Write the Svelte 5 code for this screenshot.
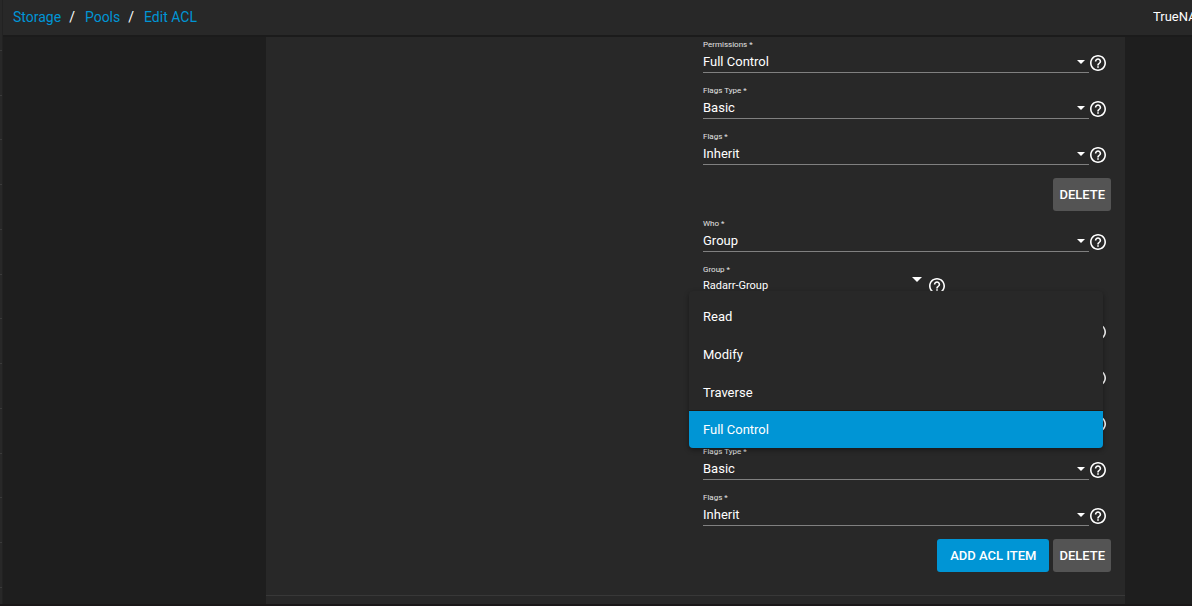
<script lang="ts">
    type Field = {
        id: string;
        label: string;
        value: string;
        options: string[];
    };

    const permissions: string[] = ["Read", "Modify", "Traverse", "Full Control"];
    const whoOptions: string[] = ["User", "Group", "owner@", "group@", "everyone@"];

    let firstItem: Field[] = [
        { id: "perms-0", label: "Permissions *", value: "Full Control", options: permissions },
        { id: "flags-type-0", label: "Flags Type *", value: "Basic", options: ["Basic", "Advanced"] },
        { id: "flags-0", label: "Flags *", value: "Inherit", options: ["Inherit", "No Inherit"] },
    ];

    let who: Field[] = [
        { id: "who-1", label: "Who *", value: "Group", options: whoOptions },
    ];

    let secondItem: Field[] = [
        { id: "acl-type-1", label: "ACL Type *", value: "Allow", options: ["Allow", "Deny"] },
        { id: "perms-type-1", label: "Permissions Type *", value: "Basic", options: ["Basic", "Advanced"] },
        { id: "perms-1", label: "Permissions *", value: "Full Control", options: permissions },
        { id: "flags-type-1", label: "Flags Type *", value: "Basic", options: ["Basic", "Advanced"] },
        { id: "flags-1", label: "Flags *", value: "Inherit", options: ["Inherit", "No Inherit"] },
    ];

    let group: string = "Radarr-Group";
    let menuOpen: boolean = true;

    function pick(option: string) {
        secondItem[2].value = option;
        menuOpen = false;
    }
</script>

{#snippet help()}
    <svg class="help" viewBox="2 2 20 20" aria-hidden="true">
        <path
            d="M11 18h2v-2h-2v2zm1-16C6.48 2 2 6.48 2 12s4.48 10 10 10 10-4.48 10-10S17.52 2 12 2zm0 18c-4.41 0-8-3.59-8-8s3.59-8 8-8 8 3.59 8 8-3.59 8-8 8zm0-14c-2.21 0-4 1.79-4 4h2c0-1.1.9-2 2-2s2 .9 2 2c0 2-3 1.75-3 5h2c0-2.25 3-2.5 3-5 0-2.21-1.79-4-4-4z"
        />
    </svg>
{/snippet}

{#snippet fieldRow(field: Field)}
    <div class="field">
        <label for={field.id}>{field.label}</label>
        <div class="row">
            <div class="control">
                <select id={field.id} bind:value={field.value}>
                    {#each field.options as option}
                        <option value={option}>{option}</option>
                    {/each}
                </select>
                <svg class="arrow" viewBox="0 0 8 4" aria-hidden="true"><path d="M0 0h8L4 4z" /></svg>
            </div>
            {@render help()}
        </div>
    </div>
{/snippet}

<div class="shell">
    <ul class="rail">
        {#each Array(13) as _}
            <li></li>
        {/each}
    </ul>
    <div class="page">
        <header>
            <nav>
                <a href="#storage">Storage</a>
                <span>/</span>
                <a href="#pools">Pools</a>
                <span>/</span>
                <a href="#acl">Edit ACL</a>
            </nav>
            <div class="brand">TrueNAS</div>
        </header>
        <main>
            <section class="card">
                <div class="form">
                    {#each firstItem as field}
                        {@render fieldRow(field)}
                    {/each}
                    <div class="actions first">
                        <button class="btn">DELETE</button>
                    </div>

                    {#each who as field}
                        {@render fieldRow(field)}
                    {/each}
                    <div class="field combo">
                        <label for="group-1">Group *</label>
                        <div class="row">
                            <input id="group-1" type="text" bind:value={group} />
                            <svg class="arrow" viewBox="0 0 10 5" aria-hidden="true"><path d="M0 0h10L5 5z" /></svg>
                            {@render help()}
                        </div>
                        {#if menuOpen}
                            <div class="menu" role="listbox">
                                {#each permissions as option}
                                    <button
                                        class="option"
                                        class:active={option === secondItem[2].value}
                                        role="option"
                                        aria-selected={option === secondItem[2].value}
                                        on:click={() => pick(option)}>{option}</button
                                    >
                                {/each}
                            </div>
                        {/if}
                    </div>
                    {#each secondItem as field}
                        {@render fieldRow(field)}
                    {/each}
                    <div class="actions">
                        <button class="btn primary">ADD ACL ITEM</button>
                        <button class="btn">DELETE</button>
                    </div>
                </div>
                <hr />
            </section>
        </main>
    </div>
</div>

<style>
    :global(body) {
        margin: 0;
        background: #1e1e1e;
        color: #fff;
        font-family: Roboto, "Liberation Sans", sans-serif;
    }
    .shell {
        display: flex;
        min-height: 100vh;
        box-sizing: border-box;
        border-bottom: 2px solid #1a1718;
    }
    .rail {
        display: flex;
        flex-direction: column;
        box-sizing: border-box;
        width: 3px;
        margin: 0;
        padding: 6px 0 16px;
        list-style: none;
        background: #282828;
        border-right: 1px solid #222;
    }
    .rail li {
        flex: 1;
        border-bottom: 1px solid #3a3a3a;
    }
    .page {
        flex: 1;
        min-width: 0;
        display: flex;
        flex-direction: column;
    }
    header {
        display: flex;
        align-items: center;
        justify-content: space-between;
        height: 33px;
        padding-bottom: 2px;
        background: #282828;
        border-bottom: 2px solid #1b1b1b;
    }
    nav {
        display: flex;
        gap: 8px;
        padding-left: 10px;
        font-size: 14px;
        line-height: 20px;
    }
    nav a {
        color: #0095d5;
        text-decoration: none;
    }
    nav span {
        margin-right: 2px;
    }
    .brand {
        width: 39px;
        overflow: hidden;
        white-space: nowrap;
        font-size: 13px;
        line-height: 20px;
    }
    main {
        flex: 1;
        display: grid;
        grid-template-columns: 263fr 859fr 67fr;
    }
    .card {
        grid-column: 2;
        padding-top: 3px;
        background: #282828;
    }
    .form {
        display: grid;
        grid-template-columns: 437fr 408fr;
        padding-right: 14px;
    }
    .form > :global(*) {
        grid-column: 2;
    }
    .field {
        margin-bottom: 13px;
    }
    label {
        display: block;
        font-size: 8px;
        line-height: 10px;
        color: #e4e4e4;
    }
    .row {
        display: flex;
        align-items: center;
        height: 23px;
        padding-right: 5px;
    }
    .control {
        flex: 1;
        display: flex;
        align-items: center;
        height: 21px;
        padding: 1px 4px 0 0;
        border-bottom: 1px solid #808080;
    }
    select,
    input {
        flex: 1;
        min-width: 0;
        padding: 0;
        border: none;
        outline: none;
        appearance: none;
        background: transparent;
        color: #fff;
        font-family: inherit;
        font-size: 13px;
        line-height: 20px;
    }
    option {
        background: #282828;
    }
    .arrow {
        width: 8px;
        height: 4px;
        fill: #fff;
    }
    .help {
        width: 16px;
        height: 16px;
        margin: 3px 0 0 1px;
        fill: #fff;
    }
    .combo {
        position: relative;
        margin-bottom: 12px;
    }
    .combo .row {
        width: 242px;
        height: 22px;
        padding-right: 0;
    }
    .combo .row > :global(.help) {
        margin-top: 0;
    }
    .combo input {
        font-size: 11px;
    }
    .combo .arrow {
        align-self: flex-start;
        width: 10px;
        height: 5px;
        margin: 2px 6px 0 0;
    }
    .menu {
        position: absolute;
        z-index: 1;
        top: 26px;
        left: -14px;
        right: 8px;
        padding-top: 5px;
        border-radius: 4px;
        overflow: hidden;
        background: #282828;
        box-shadow: 0 2px 5px rgba(0, 0, 0, 0.4);
    }
    .option {
        display: block;
        box-sizing: border-box;
        width: 100%;
        height: 38px;
        padding: 2px 14px 0;
        border: none;
        background: transparent;
        color: #fff;
        font-family: inherit;
        font-size: 13px;
        text-align: left;
        cursor: pointer;
    }
    .option.active {
        padding-top: 0;
        border-top: 1px solid #201a14;
        background: #0095d5;
    }
    .actions {
        display: flex;
        justify-content: flex-end;
        gap: 4px;
    }
    .actions.first {
        margin-bottom: 8px;
    }
    .btn {
        height: 33px;
        padding: 0 6px;
        border: none;
        border-radius: 3px;
        background: #545454;
        color: #fff;
        font-family: inherit;
        font-size: 13px;
        font-weight: 500;
        cursor: pointer;
    }
    .btn.primary {
        padding: 0 13px;
        background: #0095d5;
    }
    hr {
        margin: 23px 0 0;
        border: none;
        border-top: 1px solid #383838;
    }
</style>
